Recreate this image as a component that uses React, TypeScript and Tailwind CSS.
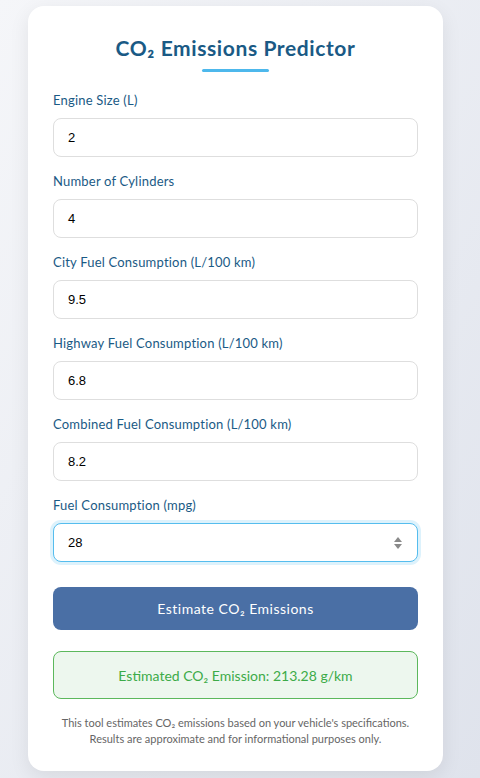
import React from "react";

const fields = [
  { label: "Engine Size (L)", value: "2" },
  { label: "Number of Cylinders", value: "4" },
  { label: "City Fuel Consumption (L/100 km)", value: "9.5" },
  { label: "Highway Fuel Consumption (L/100 km)", value: "6.8" },
  { label: "Combined Fuel Consumption (L/100 km)", value: "8.2" },
];

function Spinner() {
  return (
    <svg width="10" height="14" viewBox="0 0 10 14" className="absolute right-[14px] top-[12px]">
      <path d="M5 1 L9 6 L1 6 Z" fill="#8a8a8a" />
      <path d="M1 8 L9 8 L5 13 Z" fill="#8a8a8a" />
    </svg>
  );
}

export default function App() {
  return (
    <div className="min-h-[778px] bg-gradient-to-br from-[#f5f6f9] to-[#dfe3ec] pt-[6px] pb-[6px] font-['Lato','Liberation_Sans',sans-serif]">
      <div className="ml-[28px] w-[415px] rounded-[16px] bg-white px-[25px] pt-[28px] pb-[24px] shadow-[0_6px_20px_rgba(0,0,0,0.08)]">
        <h1 className="text-center text-[21px] font-bold leading-[28px] tracking-[0.6px] text-[#1a5a85]">
          CO₂ Emissions Predictor
        </h1>
        <div className="mx-auto mt-[7px] h-[3px] w-[67px] rounded-full bg-[#4db8ec]" />

        <div className="mt-[19px] flex flex-col gap-[15px]">
          {fields.map((f) => (
            <div key={f.label}>
              <label className="block text-[13px] leading-[18px] tracking-[0.2px] text-[#1a5a85]">{f.label}</label>
              <div className="mt-[9px] flex h-[39px] items-center rounded-[8px] border border-[#dedede] bg-white px-[14px] font-['Liberation_Sans',sans-serif] text-[13px] text-black">
                {f.value}
              </div>
            </div>
          ))}
          <div>
            <label className="block text-[13px] leading-[18px] tracking-[0.2px] text-[#1a5a85]">Fuel Consumption (mpg)</label>
            <div className="relative mt-[9px] flex h-[39px] items-center rounded-[8px] border border-[#55bdee] bg-white px-[14px] font-['Liberation_Sans',sans-serif] text-[13px] text-black shadow-[0_0_0_3px_rgba(85,189,238,0.2)]">
              28
              <Spinner />
            </div>
          </div>
        </div>

        <button className="mt-[25px] flex h-[43px] w-full items-center justify-center rounded-[8px] bg-[#4a6fa5] text-[14px] tracking-[0.5px] text-white">
          Estimate CO₂ Emissions
        </button>

        <div className="mt-[21px] flex h-[48px] items-center justify-center rounded-[8px] border border-[#5cb85c] bg-[#edf7ee] text-[14px] text-[#3cab48]">
          Estimated CO₂ Emission: 213.28 g/km
        </div>

        <p className="mt-[16px] text-center text-[11px] leading-[16px] text-[#666]">
          This tool estimates CO₂ emissions based on your vehicle's specifications.
          <br />
          Results are approximate and for informational purposes only.
        </p>
      </div>
    </div>
  );
}
